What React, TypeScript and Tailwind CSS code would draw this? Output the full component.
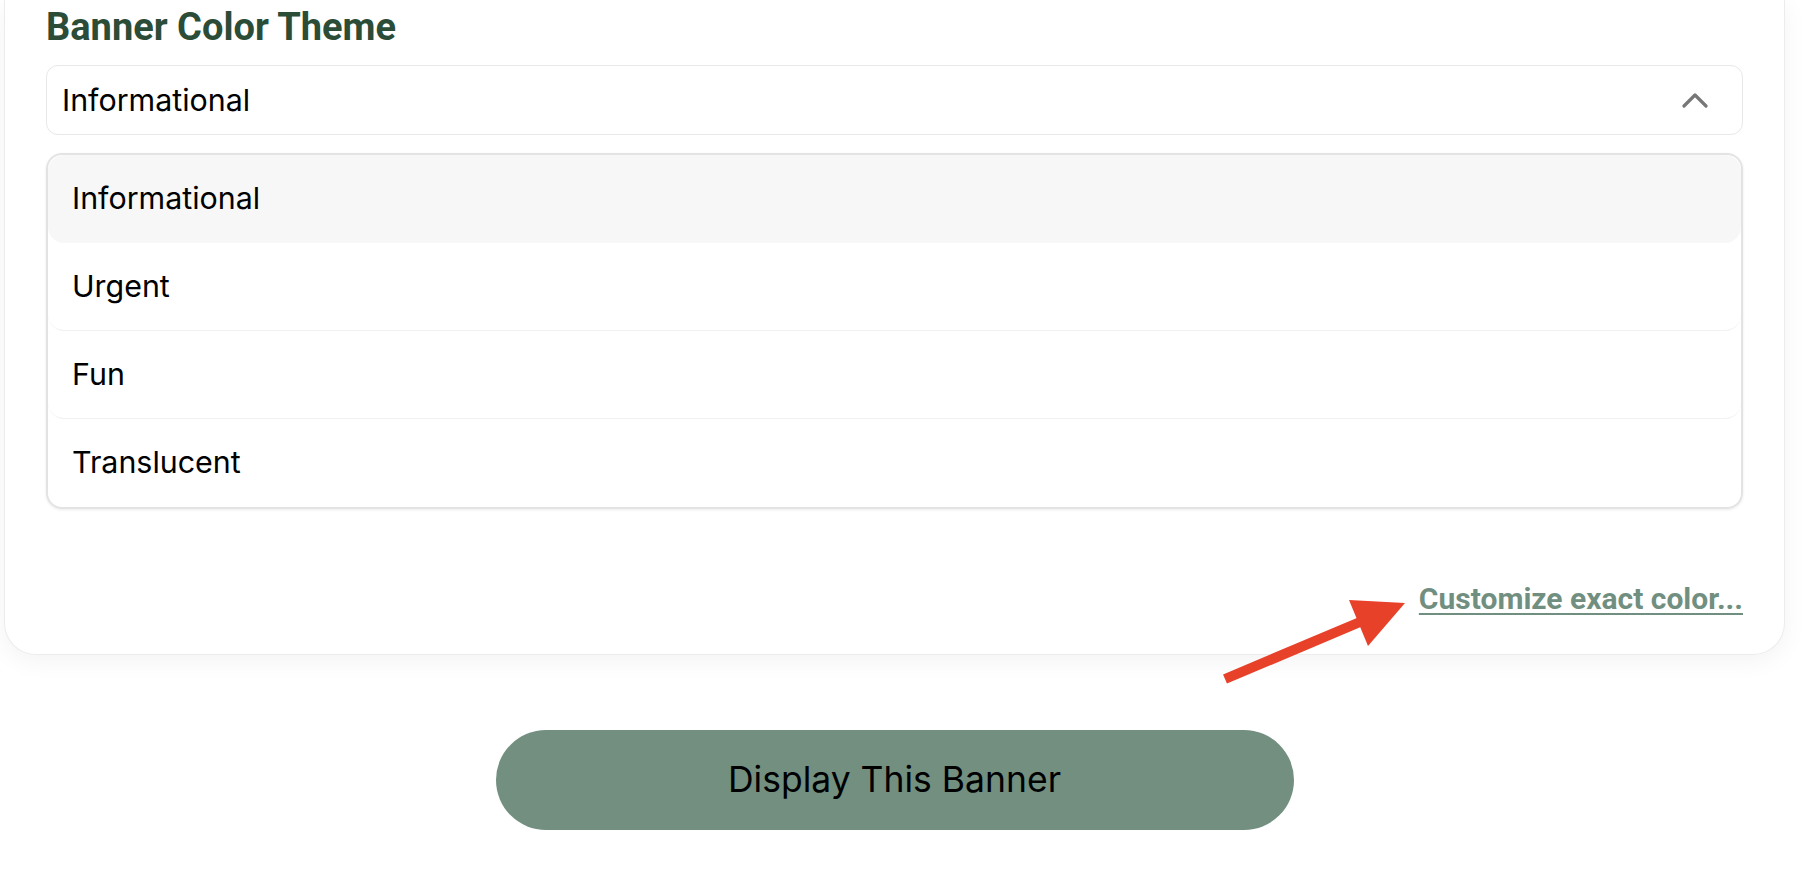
import { useState } from 'react';

const themes = ['Informational', 'Urgent', 'Fun', 'Translucent'];

function Chevron() {
  return (
    <svg width="26" height="16" viewBox="0 0 26 16" fill="none">
      <polyline
        points="2,14 13,3 24,14"
        stroke="#777777"
        strokeWidth="3.2"
        strokeLinecap="round"
        strokeLinejoin="round"
      />
    </svg>
  );
}

function Arrow() {
  return (
    <svg
      className="pointer-events-none absolute left-[1200px] top-[580px]"
      width="220"
      height="120"
      viewBox="0 0 220 120"
    >
      <line x1="25" y1="99" x2="160" y2="42" stroke="#e8412a" strokeWidth="10" />
      <polygon points="149,20 205,23 168,66" fill="#e8412a" />
    </svg>
  );
}

export default function App() {
  const [selected] = useState('Informational');

  return (
    <div className="relative min-h-[888px] w-full bg-white font-['Inter',sans-serif] text-black">
      <div className="ml-[4px] w-[1781px]">
        <div className="rounded-b-[32px] border-x border-b border-[#ececec] bg-white px-[41px] pb-[37px] pt-[5px] shadow-[0_6px_24px_rgba(0,0,0,0.05)]">
          <h2 className="font-['Roboto',sans-serif] text-[38px] font-bold leading-[45px] text-[#2b4c37]">
            Banner Color Theme
          </h2>

          <div className="mt-[15px] flex h-[70px] items-center justify-between rounded-[12px] border-[1.5px] border-[#e8e8e8] pl-[15px] pr-[34px]">
            <span className="text-[30.4px] leading-none">{selected}</span>
            <Chevron />
          </div>

          <div className="mt-[18px] overflow-hidden rounded-[16px] border-2 border-[#e3e3e3] shadow-[0_1px_3px_rgba(0,0,0,0.08)]">
            {themes.map((t, i) => (
              <div
                key={t}
                className={
                  'flex h-[88px] items-center rounded-[16px] pl-[24px] text-[30.4px] ' +
                  (i === 0 ? 'bg-[#f7f7f7] ' : 'bg-white ') +
                  (i > 0 && i < themes.length - 1 ? 'border-b border-[#f1f1f1]' : '')
                }
              >
                {t}
              </div>
            ))}
          </div>

          <div className="mt-[72px] flex justify-end">
            <a className="font-['Roboto',sans-serif] text-[30px] font-bold leading-[36px] text-[#718f80] underline decoration-2 underline-offset-[4px]">
              Customize exact color...
            </a>
          </div>
        </div>

        <div className="mt-[75px] flex justify-center">
          <button className="h-[100px] w-[798px] rounded-full bg-[#728f80] text-[35.5px] text-black">
            Display This Banner
          </button>
        </div>
      </div>

      <Arrow />
    </div>
  );
}
